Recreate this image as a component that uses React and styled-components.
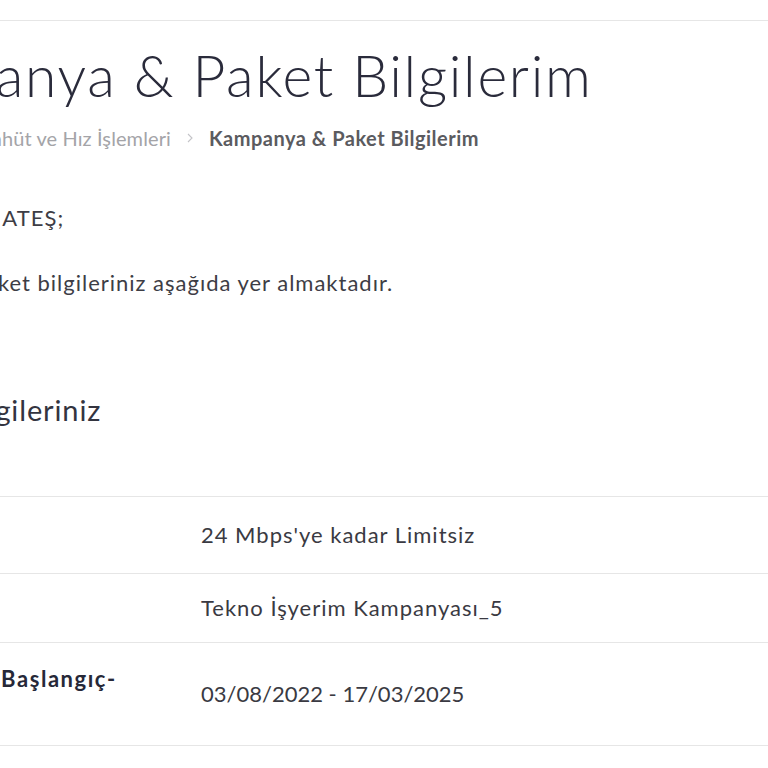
import React from 'react';
import styled, { createGlobalStyle } from 'styled-components';

const GlobalStyle = createGlobalStyle`
  html, body {
    margin: 0;
    padding: 0;
    background: #ffffff;
    overflow: hidden;
  }
  body {
    font-family: Lato, "Noto Sans", sans-serif;
    -webkit-font-smoothing: antialiased;
  }
`;

const Page = styled.div`
  width: 768px;
  height: 768px;
  overflow: hidden;
`;

const TopBar = styled.div`
  height: 20px;
  border-bottom: 1px solid #e6e6e6;
`;

// the page is scrolled sideways: the content column starts left of the window
const Content = styled.main`
  margin-left: -140px;
  width: 1100px;
`;

const Title = styled.h1`
  margin: 21px 0 0 -12px;
  font-size: 57px;
  line-height: 67px;
  font-weight: 300;
  letter-spacing: 0.03em;
  color: #2a2b3b;
  white-space: nowrap;
`;

const Breadcrumb = styled.nav`
  display: flex;
  align-items: center;
  gap: 16px;
  margin: 14px 0 0 -18px;
  height: 30px;
  font-size: 20px;
  white-space: nowrap;
`;

const Crumb = styled.span`
  color: ${p => (p.current ? '#5b5b5f' : '#a4a4a8')};
  font-weight: ${p => (p.current ? 700 : 400)};
  letter-spacing: ${p => (p.current ? '0.025em' : '0.005em')};
`;

const Chevron = styled.svg`
  width: 6px;
  height: 10px;
  flex: none;
`;

const Greeting = styled.p`
  margin: 50px 0 0 4px;
  font-size: 22px;
  line-height: 30px;
  color: #3d3d45;
  letter-spacing: 0.05em;
  white-space: nowrap;
`;

const Lead = styled.p`
  margin: 35px 0 0;
  font-size: 22px;
  line-height: 30px;
  color: #3d3d45;
  letter-spacing: 0.045em;
  white-space: nowrap;
`;

const SectionTitle = styled.h2`
  margin: 94px 0 0 -27px;
  font-size: 29px;
  line-height: 36px;
  font-weight: 400;
  letter-spacing: 0.03em;
  color: #33343f;
  white-space: nowrap;
`;

const Table = styled.div`
  margin-top: 68px;
  border-top: 1px solid #e6e6e6;
`;

const Row = styled.div`
  display: grid;
  grid-template-columns: 341px 1fr;
  align-items: center;
  height: ${p => p.h}px;
  border-bottom: 1px solid #e6e6e6;
`;

const Label = styled.div`
  padding: 0 60px 0 19px;
  font-size: 22px;
  line-height: 30px;
  font-weight: 700;
  letter-spacing: 0.07em;
  color: #262838;
`;

const Value = styled.div`
  font-size: 22px;
  line-height: 30px;
  letter-spacing: ${p => (p.numeric ? '0' : '0.045em')};
  color: #3a3a42;
  white-space: nowrap;
`;

const rows = [
  { label: 'Hız', value: "24 Mbps'ye kadar Limitsiz", h: 76 },
  { label: 'Kampanya', value: 'Tekno İşyerim Kampanyası_5', h: 68 },
  { label: 'Kampanya Başlangıç-Bitiş Tarihi', value: '03/08/2022 - 17/03/2025', h: 102, numeric: true },
];

const ChevronIcon = () => (
  <Chevron viewBox="0 0 6 10">
    <path d="M1 1l4 4-4 4" fill="none" stroke="#c4c4c8" strokeWidth="1.1" />
  </Chevron>
);

export default function App() {
  return (
    <Page>
      <GlobalStyle />
      <TopBar />
      <Content>
        <Title>Kampanya &amp; Paket Bilgilerim</Title>
        <Breadcrumb>
          <Crumb>Anasayfa</Crumb>
          <ChevronIcon />
          <Crumb>Taahhüt ve Hız İşlemleri</Crumb>
          <ChevronIcon />
          <Crumb current>Kampanya &amp; Paket Bilgilerim</Crumb>
        </Breadcrumb>
        <Greeting>Sayın Ferhat ATEŞ;</Greeting>
        <Lead>Hizmet ve paket bilgileriniz aşağıda yer almaktadır.</Lead>
        <SectionTitle>Abonelik Bilgileriniz</SectionTitle>
        <Table>
          {rows.map(r => (
            <Row key={r.label} h={r.h}>
              <Label>{r.label}</Label>
              <Value numeric={r.numeric}>{r.value}</Value>
            </Row>
          ))}
        </Table>
      </Content>
    </Page>
  );
}
